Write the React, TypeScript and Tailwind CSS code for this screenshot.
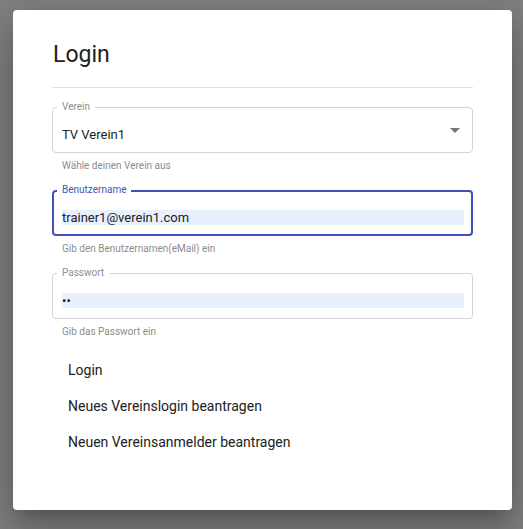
import React from "react";

type FieldProps = {
  label: string;
  helper: string;
  value: string;
  focused?: boolean;
  password?: boolean;
  select?: boolean;
};

function OutlinedField({ label, helper, value, focused, password, select }: FieldProps) {
  return (
    <div className="mb-[18px]">
      <div className="relative">
        <div
          className={
            focused
              ? "h-[46px] rounded-[4px] border-2 border-[#3f51b5] pt-[18px] pl-[8px] pr-[7px]"
              : "h-[46px] rounded-[4px] border border-[#d4d4d4] pt-[19px] pl-[9px] pr-[8px]"
          }
        >
          {select ? (
            <div className="flex h-[15px] items-center text-[13px] text-[#212121]">{value}</div>
          ) : (
            <input
              readOnly
              type={password ? "password" : "text"}
              value={value}
              className="block h-[15px] w-full bg-[#e8f0fe] p-0 text-[13px] text-[#212121] outline-none"
            />
          )}
        </div>
        <span
          className={
            focused
              ? "absolute -top-[6px] left-[5px] bg-white px-[5px] text-[10px] leading-[12px] text-[#4655b8]"
              : "absolute -top-[6px] left-[5px] bg-white px-[5px] text-[10px] leading-[12px] text-[#8f8f8f]"
          }
        >
          {label}
        </span>
        {select && (
          <svg
            viewBox="0 0 24 24"
            className="absolute right-[6px] top-[11px] h-[24px] w-[24px] fill-[#757575]"
          >
            <path d="M7 10l5 5 5-5z" />
          </svg>
        )}
      </div>
      <p className="mt-[7px] pl-[10px] text-[10px] leading-[12px] text-[#8c8c8c]">{helper}</p>
    </div>
  );
}

export default function App() {
  return (
    <div className="h-[529px] w-[523px] bg-[#808080] pt-[10px] pl-[13px] font-['Roboto',sans-serif]">
      <div className="h-[500px] w-[499px] rounded-[4px] bg-white px-[39px] pt-[29px] shadow-[0_11px_15px_-7px_rgba(0,0,0,0.2),0_24px_38px_3px_rgba(0,0,0,0.14),0_9px_46px_8px_rgba(0,0,0,0.12)]">
        <h1 className="pl-[1px] text-[23px] leading-[32px] font-normal text-[#212121]">Login</h1>
        <div className="mt-[16px] h-px bg-[#e0e0e0]" />
        <div className="mt-[19px]">
          <OutlinedField label="Verein" helper="Wähle deinen Verein aus" value="TV Verein1" select />
          <OutlinedField
            label="Benutzername"
            helper="Gib den Benutzernamen(eMail) ein"
            value="trainer1@verein1.com"
            focused
          />
          <OutlinedField label="Passwort" helper="Gib das Passwort ein" value="ab" password />
        </div>
        <div className="-mt-[4px] flex flex-col items-start">
          <button className="h-[36px] pl-[16px] text-[14px] text-[#212121]">Login</button>
          <button className="h-[36px] pl-[16px] text-[14px] text-[#212121]">Neues Vereinslogin beantragen</button>
          <button className="h-[36px] pl-[16px] text-[14px] text-[#212121]">Neuen Vereinsanmelder beantragen</button>
        </div>
      </div>
    </div>
  );
}
